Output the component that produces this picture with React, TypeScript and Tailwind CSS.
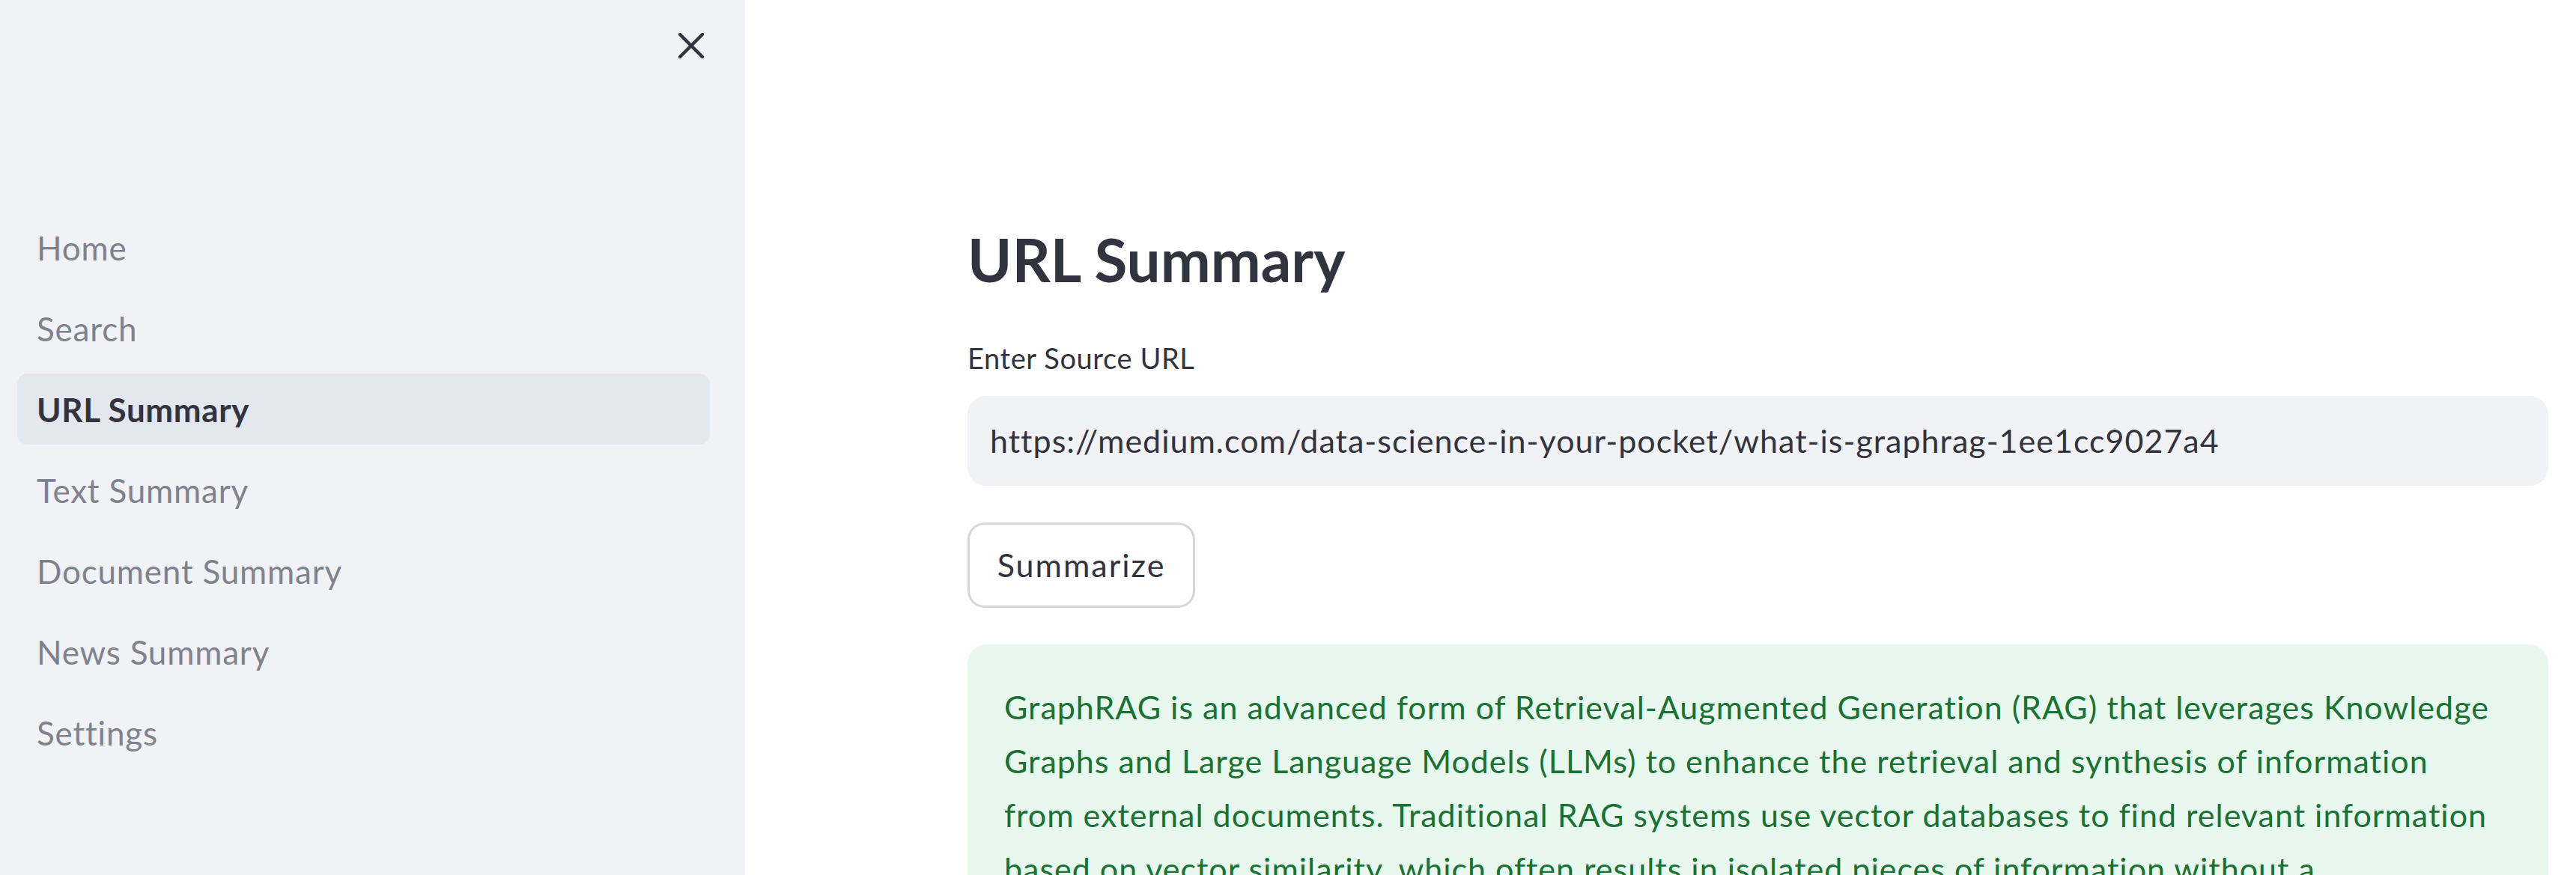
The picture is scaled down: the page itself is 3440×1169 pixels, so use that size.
import React from "react";

const navItems = [
  "Home",
  "Search",
  "URL Summary",
  "Text Summary",
  "Document Summary",
  "News Summary",
  "Settings",
];

const summaryLines = [
  "GraphRAG is an advanced form of Retrieval-Augmented Generation (RAG) that leverages Knowledge",
  "Graphs and Large Language Models (LLMs) to enhance the retrieval and synthesis of information",
  "from external documents. Traditional RAG systems use vector databases to find relevant information",
  "based on vector similarity, which often results in isolated pieces of information without a",
  "holistic understanding of how they relate to each other. GraphRAG addresses this by building a",
  "knowledge graph from the source documents and using it to answer questions with more context.",
];

const CloseIcon = () => (
  <svg width="34" height="34" viewBox="0 0 34 34" fill="none">
    <path
      d="M2 2L32 32M32 2L2 32"
      stroke="#31333f"
      strokeWidth="4.5"
      strokeLinecap="round"
    />
  </svg>
);

const Sidebar = ({ active }: { active: string }) => (
  <aside className="relative w-[995px] shrink-0 h-full bg-[#f0f2f6]">
    {/* close button */}
    <button className="absolute left-[906px] top-[44px] w-[34px] h-[34px]">
      <CloseIcon />
    </button>

    <nav className="flex flex-col gap-[13px] pt-[283px]">
      {navItems.map((item) => {
        const isActive = item === active;
        return (
          <div
            key={item}
            className={
              isActive
                ? "ml-[23px] w-[925px] h-[95px] flex items-center pl-[26px] rounded-[14px] bg-[#e3e7ee] text-[#31333f] font-bold text-[44px] tracking-[0.6px]"
                : "ml-[23px] w-[925px] h-[95px] flex items-center pl-[26px] text-[#7f828e] text-[44px] tracking-[0.8px]"
            }
          >
            {item}
          </div>
        );
      })}
    </nav>
  </aside>
);

export default function App() {
  return (
    <div className="flex w-[3440px] h-[1169px] overflow-hidden bg-white font-['Lato',sans-serif] text-[#31333f]">
      <Sidebar active="URL Summary" />

      <main className="flex-1 pl-[297px] pr-[37px] pt-[298px]">
        <h1 className="text-[80px] font-bold leading-[1.2]">URL Summary</h1>

        <label className="block mt-[54px] text-[38px] leading-[1.6] tracking-[0.6px]">
          Enter Source URL
        </label>
        <div className="mt-[20px] h-[120px] rounded-[25px] bg-[#f0f2f6] flex items-center px-[30px] text-[43px] leading-[1.2] tracking-[1px]">
          https://medium.com/data-science-in-your-pocket/what-is-graphrag-1ee1cc9027a4
        </div>

        <button className="mt-[49px] w-[304px] h-[114px] rounded-[23px] border-[3px] border-[#d6d6d9] bg-white text-[43px] leading-[1.2] tracking-[2px] flex items-center justify-center">
          Summarize
        </button>

        <div className="mt-[49px] rounded-[25px] bg-[#e8f8ee] pt-[48px] pl-[49px] pr-[49px] pb-[48px] text-[43px] leading-[72px] tracking-[1px] text-[#177233]">
          {summaryLines.map((line) => (
            <span key={line} className="block whitespace-nowrap">
              {line}
            </span>
          ))}
        </div>
      </main>
    </div>
  );
}
